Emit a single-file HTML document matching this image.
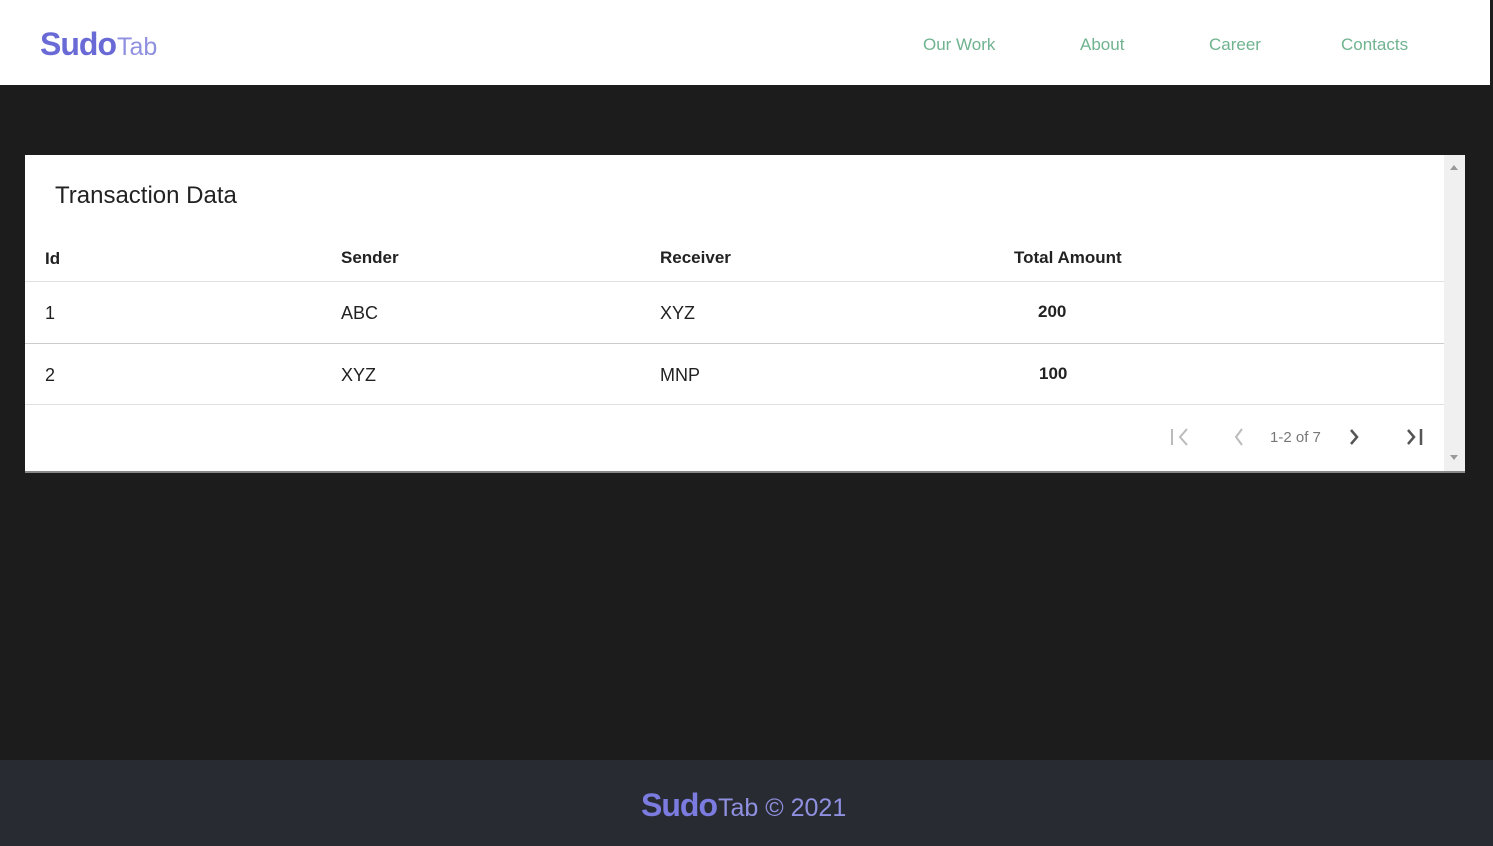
<!DOCTYPE html>
<html><head><style>
*{margin:0;padding:0;box-sizing:border-box}
body{width:1493px;height:846px;overflow:hidden;background:#1c1c1c;font-family:"Liberation Sans",sans-serif;position:relative}
.hdr{position:absolute;left:0;top:0;width:1490px;height:85px;background:#fff}
.logo{position:absolute;left:40px;top:26px;color:#6f6fd8;font-size:32px;white-space:nowrap}
.logo b{font-weight:900;letter-spacing:-1px;color:#6a6ad6}
.logo span{font-size:25px;font-weight:300;color:#9090e0;margin-left:1px}
.nav a{position:absolute;top:35px;font-size:17px;color:#6fb38f;text-decoration:none}
.card{position:absolute;left:25px;top:155px;width:1419px;height:316px;background:#fff}
.sb{position:absolute;left:1444px;top:155px;width:21px;height:316px;background:#f0f0f0}
.t{position:absolute;font-size:16px;color:#222}
.line{position:absolute;left:0;width:1419px;height:1px;background:#e0e0e0}
.foot{position:absolute;left:0;top:760px;width:1493px;height:86px;background:#282b32}
</style></head><body>
<div class="hdr">
<div class="logo"><b>Sudo</b><span>Tab</span></div>
<div class="nav"><a style="left:923px">Our Work</a><a style="left:1080px">About</a><a style="left:1209px">Career</a><a style="left:1341px">Contacts</a></div>
</div>
<div class="card">
<div class="t" style="left:30px;top:27px;font-size:24px">Transaction Data</div>
<div class="t" style="left:20px;top:94px;font-size:17px;font-weight:bold">Id</div>
<div class="t" style="left:316px;top:93px;font-size:17px;font-weight:bold">Sender</div>
<div class="t" style="left:635px;top:93px;font-size:17px;font-weight:bold">Receiver</div>
<div class="t" style="left:989px;top:93px;font-size:17px;font-weight:bold">Total Amount</div>
<div class="line" style="top:126px"></div>
<div class="t" style="left:20px;top:148px;font-size:18px">1</div>
<div class="t" style="left:316px;top:148px;font-size:18px">ABC</div>
<div class="t" style="left:635px;top:148px;font-size:18px">XYZ</div>
<div class="t" style="left:1013px;top:147px;font-size:17px;font-weight:bold">200</div>
<div class="line" style="top:188px;background:#ccc"></div>
<div class="t" style="left:20px;top:210px;font-size:18px">2</div>
<div class="t" style="left:316px;top:210px;font-size:18px">XYZ</div>
<div class="t" style="left:635px;top:210px;font-size:18px">MNP</div>
<div class="t" style="left:1014px;top:209px;font-size:17px;font-weight:bold">100</div>
<div class="line" style="top:249px"></div>
<svg style="position:absolute;left:1140px;top:270px" width="270" height="24">
<g fill="none" stroke-width="2">
<path d="M7 4v16M22 4l-7 8 7 8" stroke="#bbb"/>
<path d="M77 4l-6 8 6 8" stroke="#bbb"/>
<path d="M186 5l6 7-6 7" stroke="#555" stroke-width="2.5"/>
<path d="M243 5l6 7-6 7M256 4v16" stroke="#555" stroke-width="2.5"/>
</g>
<text x="105" y="17" font-size="15" fill="#777" font-family="Liberation Sans">1-2 of 7</text>
</svg>
</div>
<div class="sb"><svg width="21" height="316"><path d="M6 15l4-5 4 5z M6 300l4 5 4-5z" fill="#999"/></svg></div>
<div style="position:absolute;left:25px;top:471px;width:1440px;height:2px;background:#888"></div>
<div class="foot"><div class="logo" style="left:641px;top:27px;color:#7b7be0"><b style="color:#7b7be0">Sudo</b><span style="font-size:25px">Tab © 2021</span></div></div>
</body></html>
